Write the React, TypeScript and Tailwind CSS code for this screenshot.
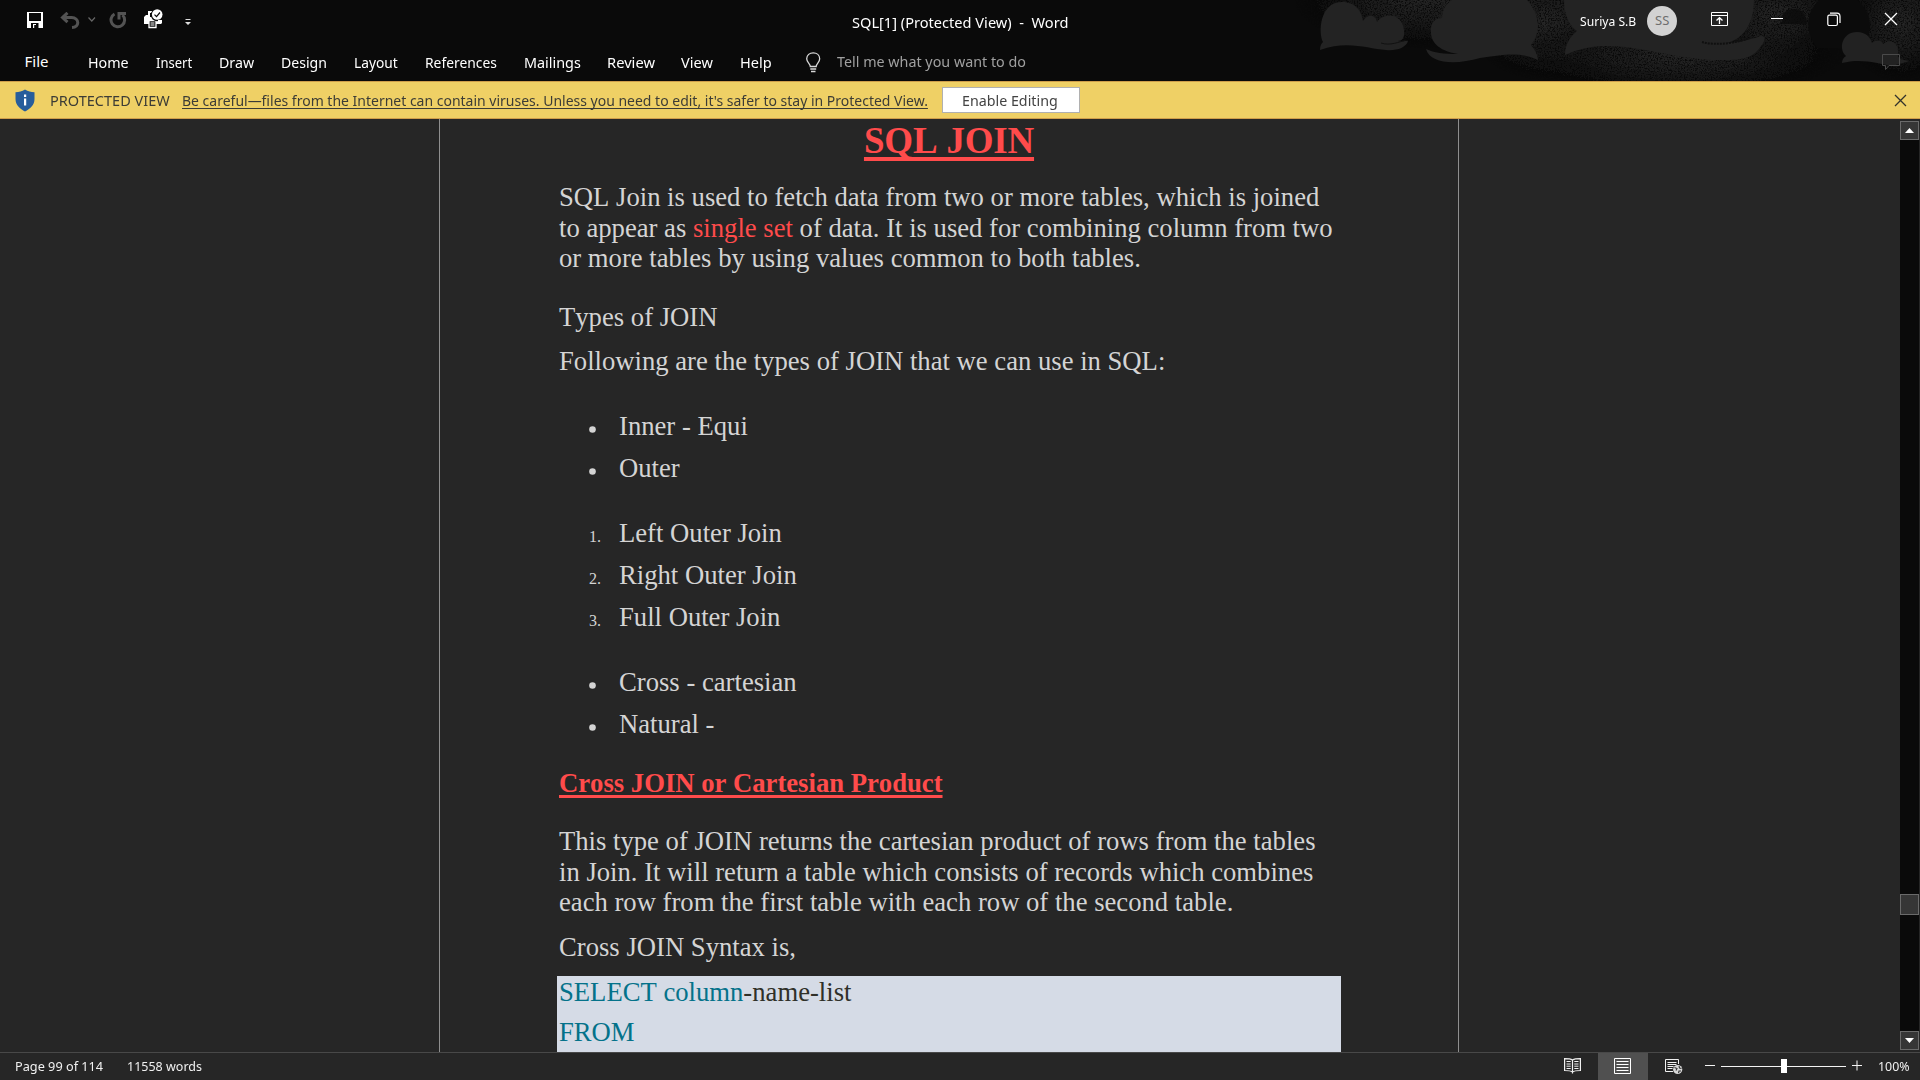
import React from "react";

const UI = "font-['Noto_Sans','Open_Sans',sans-serif]";

const tabs = [
  { label: "Home", box: "w-[68px]", len: 41 },
  { label: "Insert", box: "w-[63px]", len: 36.5 },
  { label: "Draw", box: "w-[62px]", len: 35 },
  { label: "Design", box: "w-[73px]", len: 46 },
  { label: "Layout", box: "w-[71px]", len: 44 },
  { label: "References", box: "w-[99px]", len: 72 },
  { label: "Mailings", box: "w-[83px]", len: 56.5 },
  { label: "Review", box: "w-[74px]", len: 48 },
  { label: "View", box: "w-[59px]", len: 32 },
  { label: "Help", box: "w-[65px]", len: 32 },
];

/** Condenses a label horizontally so that it fills exactly `width` pixels. */
function Fit({ width, children, className = "" }: { width: number; children: string; className?: string }) {
  const ref = React.useRef<HTMLSpanElement>(null);
  const [scale, setScale] = React.useState(1);
  React.useLayoutEffect(() => {
    if (ref.current) setScale(width / ref.current.offsetWidth);
  }, [width]);
  return (
    <span className="inline-block shrink-0" style={{ width }}>
      <span ref={ref} className={`inline-block origin-left whitespace-pre ${className}`} style={{ transform: `scaleX(${scale})` }}>
        {children}
      </span>
    </span>
  );
}

function Clouds() {
  return (
    <svg className="absolute right-0 top-0" width="640" height="81" viewBox="0 0 640 81">
      <defs>
        <radialGradient id="glow">
          <stop offset="0" stopColor="#262626" stopOpacity="0.95" />
          <stop offset="0.5" stopColor="#1e1e1e" stopOpacity="0.7" />
          <stop offset="1" stopColor="#0a0a0a" stopOpacity="0" />
        </radialGradient>
        <filter id="grain" x="0" y="0" width="100%" height="100%">
          <feTurbulence type="fractalNoise" baseFrequency="0.7" numOctaves="2" seed="4" result="n" />
          <feColorMatrix in="n" type="matrix" values="0 0 0 0 0  0 0 0 0 0  0 0 0 0 0  0 0 0 -4 2.800" result="m" />
          <feComposite in="SourceGraphic" in2="m" operator="in" />
        </filter>
      </defs>
      <g filter="url(#grain)">
        <ellipse cx="140" cy="0" rx="130" ry="50" fill="url(#glow)" />
        <ellipse cx="265" cy="22" rx="80" ry="60" fill="url(#glow)" />
        <ellipse cx="400" cy="55" rx="170" ry="42" fill="url(#glow)" />
        <ellipse cx="495" cy="14" rx="75" ry="50" fill="url(#glow)" />
        <ellipse cx="622" cy="22" rx="60" ry="62" fill="url(#glow)" />
      </g>
      <path d="M537 48C526 34 524 12 540 0H577C592 12 594 32 582 48Z" fill="#0b0b0b" />
      <path d="M502 24C500 14 506 9 514 9S526 14 527 24Z" fill="#0b0b0b" opacity="0.8" />
      <path d="M40 50C40 46 41 44 43 42C38 32 40 2 62 2C76 2 82 12 83 21C88 13 96 15 97 22C104 12 122 13 124 30C125 38 122 41 118 41C124 42 128 40 128 41C126 48 116 51 106 50C88 49 68 40 40 50Z" fill="#232323" />
      <path d="M101 43C110 46 119 42 126 40" fill="none" stroke="#111" strokeWidth="1" />
      <path d="M172 0H247C260 14 261 33 251 45C255 50 258 55 258 60C240 51 222 55 200 58C176 65 150 64 146 49C154 53 164 54 178 54C155 50 150 40 151 28C152 21 156 18 162 18C162 10 166 4 172 0Z" fill="#232323" />
      <path d="M284 0H474C474 20 466 38 447 43C460 43 474 38 481 36C486 36 485 42 481 46C472 60 460 60 440 60C380 60 335 32 285 55C285 44 290 37 297 31C288 25 284 12 284 0Z" fill="#232323" />
      <path d="M422 42C436 46 456 43 470 38" fill="none" stroke="#101010" strokeWidth="2" strokeDasharray="2 1" />
      <path d="M562 63C562 60 563 58 566 56C558 49 562 32 577 32C586 32 590 37 592 43C596 39 602 40 603 44C611 37 619 44 618 53C617 58 620 60 630 61L612 66C597 63 580 58 562 63Z" fill="#222222" />
    </svg>
  );
}

function TitleBar() {
  return (
    <div className="relative flex h-[44px] items-start">
      <div className="flex h-[44px] w-[852px] pl-[26px]">
        {/* save */}
        <svg className="mt-[12px]" width="18" height="16" viewBox="0 0 18 16">
          <path d="M1 0H17V16H1Z" fill="#fff" />
          <path d="M3 1H15V9H3Z" fill="#0a0a0a" />
          <path d="M5 11H12.500V16H5Z" fill="#0a0a0a" />
          <path d="M7 12H10V16H7Z" fill="#fff" />
          <path d="M8.200 13H10V16H8.200Z" fill="#0a0a0a" />
        </svg>
        {/* undo */}
        <svg className="ml-[16px] mt-[12px]" width="20" height="17" viewBox="0 0 20 17">
          <path d="M7.500 0.800L2.500 5.500L7.500 10.200M3 5.500H11.500C19.500 6 20 15 12 15.500" fill="none" stroke="#535353" strokeWidth="3" />
        </svg>
        <svg className="ml-[8px] mt-[16px]" width="8" height="7" viewBox="0 0 8 7">
          <path d="M0.500 1.500L3.800 5L7 1.500" fill="none" stroke="#666" strokeWidth="1.200" />
        </svg>
        {/* repeat */}
        <svg className="ml-[13px] mt-[11px]" width="18" height="18" viewBox="0 0 18 18">
          <path d="M5.500 3A6.800 6.800 0 1 0 13.500 4M10 8.500V2.500H17" fill="none" stroke="#535353" strokeWidth="3" />
        </svg>
        {/* print preview */}
        <svg className="ml-[16px] mt-[9px]" width="20" height="20" viewBox="0 0 20 20">
          <path d="M5 2H11V7H5ZM1 8L3 6H18V14L17 15H1Z" fill="#fff" />
          <path d="M7 4H9.500V8H7Z" fill="#0a0a0a" />
          <path d="M6 11.500H13V18.500H6Z" fill="#0a0a0a" stroke="#fff" strokeWidth="1.300" />
          <path d="M7.500 14H11.500M7.500 16H11.500" stroke="#fff" />
          <circle cx="14" cy="6" r="6.200" fill="#0a0a0a" />
          <circle cx="14.200" cy="5.500" r="5.300" fill="#fff" />
          <path d="M17 11H19V14L18 15H15V11Z" fill="#fff" />
          <path d="M11.500 5.700L13.500 7.700L17 3.500" fill="none" stroke="#0a0a0a" strokeWidth="1.200" />
        </svg>
        <svg className="ml-[21px] mt-[18px]" width="8" height="8" viewBox="0 0 8 8">
          <path d="M1.500 1H6.500V2H1.500ZM1 4H7L4 7Z" fill="#ddd" />
        </svg>
      </div>
      <div className="pt-[10px] text-[15px] leading-[24px] text-white">
        <Fit width={216}>{"SQL[1] (Protected View)  -  Word"}</Fit>
      </div>
      <div className="relative ml-auto flex w-[340px]">
        <div className="pt-[10px] text-[13px] leading-[22px] text-white">
          <Fit width={56}>Suriya S.B</Fit>
        </div>
        <div className="ml-[11px] mt-[6px] flex h-[30px] w-[30px] items-center justify-center rounded-full bg-[#d2d2d2] text-[13px] text-[#6e6e6e]">
          <Fit width={14}>SS</Fit>
        </div>
        <svg className="ml-[34px] mt-[12px]" width="18" height="15" viewBox="0 0 18 15">
          <path d="M0.500 0.500H16.500V13.500H0.500ZM0.500 3.500H16.500" fill="none" stroke="#fff" />
          <path d="M8.500 12V6.500M5.500 8.500L8.500 5.700L11.500 8.500" fill="none" stroke="#fff" strokeWidth="1.300" />
        </svg>
        <svg className="ml-[41px] mt-[17px]" width="14" height="3" viewBox="0 0 14 3">
          <path d="M1 1.500H13" stroke="#fff" />
        </svg>
        <svg className="ml-[43px] mt-[12px]" width="14" height="15" viewBox="0 0 14 15">
          <rect x="0.800" y="3.200" width="9.600" height="10.300" rx="1.500" fill="none" stroke="#fff" strokeWidth="1.200" />
          <path d="M3 1.200H10C12 1.200 13 2.400 13 4.500V11" fill="none" stroke="#fff" strokeWidth="1.200" />
        </svg>
        <svg className="ml-[43px] mt-[12px]" width="14" height="14" viewBox="0 0 14 14">
          <path d="M1 1L13 13M13 1L1 13" stroke="#fff" strokeWidth="1.300" />
        </svg>
      </div>
    </div>
  );
}

function Ribbon() {
  return (
    <div className="relative flex h-[37px] text-[15px] leading-[22px] text-white">
      <div className="ml-[24.500px] w-[63.500px] pt-[6px]">
        <Fit width={24}>File</Fit>
      </div>
      {tabs.map((t) => (
        <div key={t.label} className={`${t.box} shrink-0 pt-[7px]`}>
          <Fit width={t.len}>{t.label}</Fit>
        </div>
      ))}
      <svg className="mt-[8px]" width="17" height="21" viewBox="0 0 17 21">
        <path d="M5.300 14.500C5.300 11.500 1.700 10.500 1.700 6.800C1.700 3 4.700 0.800 8.200 0.800S14.700 3 14.700 6.800C14.700 10.500 11.200 11.500 11.200 14.500Z" fill="none" stroke="#d8d8d8" strokeWidth="1.300" />
        <path d="M5.300 17H11.200M6 19.500H10.500" stroke="#d8d8d8" strokeWidth="1.300" />
      </svg>
      <div className="ml-[15px] pt-[6px] text-[#a0a0a0]">
        <Fit width={189}>Tell me what you want to do</Fit>
      </div>
      <svg className="ml-auto mr-[19px] mt-[10px]" width="19" height="17" viewBox="0 0 19 17">
        <path d="M0.500 0.500H17.500V11.500H7L3.500 15.500V11.500H0.500Z" fill="none" stroke="#4a4a4a" />
      </svg>
    </div>
  );
}

function ProtectedBar() {
  return (
    <div className="flex h-[38px] border-y border-[#cf9e4b] bg-[#efd065] text-[15px] leading-[36px] text-[#3c3c36]">
      <svg className="ml-[15px] mt-[7px]" width="20" height="23" viewBox="0 0 20 23">
        <path d="M10 0.500C13 2.500 16 3 19.500 3.200V10C19.500 16 15 20 10 22.500C5 20 0.500 16 0.500 10V3.200C4 3 7 2.500 10 0.500Z" fill="#275d9b" />
        <path d="M9 5.500H11.200V8H9ZM9 9.500H11.200V16.500H9Z" fill="#fff" />
      </svg>
      <div className="ml-[15px] w-[132px]">
        <Fit width={120}>PROTECTED VIEW</Fit>
      </div>
      <Fit width={746} className="underline decoration-1 underline-offset-2 [text-decoration-skip-ink:none]">
        Be careful—files from the Internet can contain viruses. Unless you need to edit, it's safer to stay in Protected View.
      </Fit>
      <div className="ml-[14px] mt-[5px] flex h-[26px] w-[138px] border border-[#b0b0b0] bg-white pl-[19px] leading-[24px] text-[#444]">
        <Fit width={96}>Enable Editing</Fit>
      </div>
      <svg className="ml-auto mr-[13.500px] mt-[12px]" width="13" height="13" viewBox="0 0 13 13">
        <path d="M1 1L12 12M12 1L1 12" stroke="#33332c" strokeWidth="1.300" />
      </svg>
    </div>
  );
}

function Bulleted({ items, className }: { items: string[]; className: string }) {
  return (
    <ul className={className}>
      {items.map((t) => (
        <li key={t} className="flex h-[42px]">
          <svg className="ml-[30px] mr-[23px] mt-[15px]" width="7" height="7" viewBox="0 0 7 7">
            <circle cx="3.500" cy="3.500" r="3.300" fill="#d4d4d4" />
          </svg>
          {t}
        </li>
      ))}
    </ul>
  );
}

function Document() {
  return (
    <div className="ml-[439px] h-[933px] w-[1020px] overflow-hidden border-x border-[#8f8f8f] pl-[119px] font-['Liberation_Serif',serif] text-[26.667px] leading-[30.667px] text-[#d4d4d4] [font-kerning:none]">
      <h1 className="h-[43px] w-[780px] text-center text-[37px] font-bold leading-[43px] tracking-[-0.2px] text-[#ff4b4b]">
        <span className="underline decoration-[4px] underline-offset-[4px] [text-decoration-skip-ink:none]">SQL JOIN</span>
      </h1>
      <p className="mt-[20px] whitespace-nowrap">
        SQL Join is used to fetch data from two or more tables, which is joined
        <br />
        to appear as <span className="text-[#ff4b4b]">single set</span> of data. It is used for combining column from two
        <br />
        or more tables by using values common to both tables.
      </p>
      <p className="mt-[28px]">Types of JOIN</p>
      <p className="mt-[13.500px]">Following are the types of JOIN that we can use in SQL:</p>
      <Bulleted className="mt-[34.500px]" items={["Inner - Equi", "Outer"]} />
      <ol className="mt-[23px]">
        {["Left Outer Join", "Right Outer Join", "Full Outer Join"].map((t, i) => (
          <li key={t} className="flex h-[42px] items-baseline">
            <span className="ml-[30px] w-[30px] text-[16px]">{i + 1}.</span>
            {t}
          </li>
        ))}
      </ol>
      <Bulleted className="mt-[23px]" items={["Cross - cartesian", "Natural -"]} />
      <h2 className="mt-[17px] font-bold text-[#ff4b4b]">
        <span className="underline decoration-[3px] underline-offset-[3px] [text-decoration-skip-ink:none]">Cross JOIN or Cartesian Product</span>
      </h2>
      <p className="mt-[27px] whitespace-nowrap">
        This type of JOIN returns the cartesian product of rows from the tables
        <br />
        in Join. It will return a table which consists of records which combines
        <br />
        each row from the first table with each row of the second table.
      </p>
      <p className="mt-[14px]">Cross JOIN Syntax is,</p>
      <div className="-ml-[2px] mt-[13px] h-[80px] w-[784px] bg-[#d5dbe6] pl-[2px] pt-px text-[#2f3029]">
        <p className="h-[40px]">
          <span className="text-[#04728a]">SELECT column</span>-name-list
        </p>
        <p className="text-[#04728a]">FROM</p>
      </div>
    </div>
  );
}

function ScrollBar() {
  return (
    <div className="mr-px mt-[2px] flex h-[929px] w-[19px] flex-col bg-[#0a0a0a]">
      <div className="flex h-[19px] items-center justify-center border border-[#6a6a6a] bg-[#363636]">
        <svg width="9" height="5" viewBox="0 0 9 5">
          <path d="M4.500 0L9 5H0Z" fill="#fff" />
        </svg>
      </div>
      <div className="mt-[754px] h-[21px] border border-[#6a6a6a] bg-[#363636]" />
      <div className="mt-auto flex h-[19px] items-center justify-center border border-[#6a6a6a] bg-[#363636]">
        <svg width="9" height="5" viewBox="0 0 9 5">
          <path d="M0 0H9L4.500 5Z" fill="#fff" />
        </svg>
      </div>
    </div>
  );
}

function StatusBar() {
  return (
    <div className="flex h-[28px] border-t border-[#484848] bg-[#262626] text-[13px] leading-[27px] text-[#f0f0f0]">
      <div className="ml-[15px] w-[112px]">
        <Fit width={88}>Page 99 of 114</Fit>
      </div>
      <Fit width={75}>11558 words</Fit>
      <div className="ml-auto flex w-[356px]">
        <svg className="mt-[5px]" width="17" height="16" viewBox="0 0 17 16">
          <path d="M8.500 2C6.500 0.700 4 0.600 0.600 0.600V12.500C4 12.500 6.500 12.600 8.500 14C10.500 12.600 13 12.500 16.400 12.500V0.600C13 0.600 10.500 0.700 8.500 2ZM8.500 2V15.500" fill="none" stroke="#f0f0f0" strokeWidth="1.200" />
          <path d="M2.500 3.500H6.700M2.500 6H6.700M2.500 8.200H6.700M2.500 10.500H6.700M10.300 3.500H14.500M10.300 6H14.500M10.300 8.200H14.500M10.300 10.500H14.500" stroke="#f0f0f0" />
        </svg>
        <div className="ml-[17px] flex h-[27px] w-[50px] bg-[#505050] pl-[16px]">
          <svg className="mt-[5px]" width="17" height="16" viewBox="0 0 17 16">
            <path d="M0.500 0.500H16.500V15.500H0.500ZM2.500 3.500H14.500M2.500 6.500H14.500M2.500 9.500H14.500M2.500 12.500H14.500" fill="none" stroke="#fff" />
          </svg>
        </div>
        <svg className="ml-[17px] mt-[6px]" width="18" height="16" viewBox="0 0 18 16">
          <path d="M8 12.500H0.500V0.500H13.500V5M2.500 3.500H11.500M2.500 5.500H11.500M2.500 7.500H8.500M2.500 9.500H7.500" fill="none" stroke="#f0f0f0" />
          <circle cx="12.700" cy="10.500" r="4.600" fill="#d8d8d8" />
          <path d="M9.500 8.500L12 9.500L11 11.500M14 7L14.500 9L16.500 9.500M13.500 14L14 12L16 12" fill="none" stroke="#333" strokeWidth="1.100" />
        </svg>
        <svg className="ml-[22px] mt-[5px]" width="158" height="16" viewBox="0 0 158 16">
          <path d="M0 7.500H10M147 7.500H157M152 2.500V12.500M16 8.500H141" stroke="#f4f4f4" />
          <path d="M76 1H82V15H76Z" fill="#fff" />
        </svg>
        <div className="ml-[15px]">
          <Fit width={31.500}>100%</Fit>
        </div>
      </div>
    </div>
  );
}

export default function App() {
  return (
    <div className={`flex h-[1080px] w-[1920px] flex-col overflow-hidden bg-[#262626] ${UI}`}>
      <header className="relative h-[81px] shrink-0 bg-[#0a0a0a]">
        <Clouds />
        <TitleBar />
        <Ribbon />
      </header>
      <ProtectedBar />
      <main className="flex h-[933px] shrink-0 justify-between">
        <Document />
        <ScrollBar />
      </main>
      <StatusBar />
    </div>
  );
}
